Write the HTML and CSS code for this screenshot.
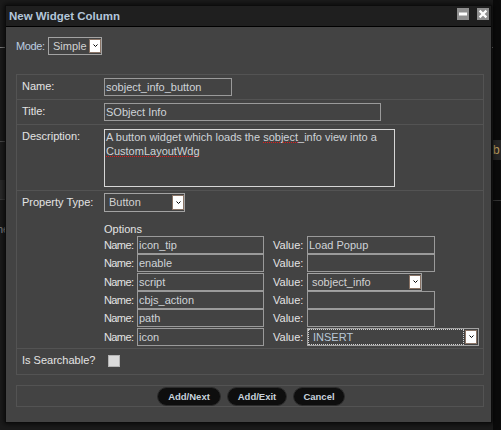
FILE: index.html
```html
<!DOCTYPE html>
<html>
<head>
<meta charset="utf-8">
<title>New Widget Column</title>
<link rel="stylesheet" href="styles.css">
</head>
<body>
<div class="backdrop" aria-hidden="true">
  <div class="bd-hline"></div>
  <div class="bd-leftbox"></div>
  <div class="bd-lefttext">ne</div>
  <div class="bd-right"><div class="bd-rightband">b</div><div class="bd-rightline"></div></div>
</div>

<div class="window">
  <div class="titlebar">
    <span class="title">New Widget Column</span>
    <div class="tb-btns">
      <span class="tb-btn"><svg width="12" height="12" viewBox="0 0 12 12"><rect x="2" y="4.5" width="8" height="3" fill="#fff"/></svg></span>
      <span class="tb-btn"><svg width="12" height="12" viewBox="0 0 12 12"><path d="M2.6 2.6 L9.4 9.4 M9.4 2.6 L2.6 9.4" stroke="#fff" stroke-width="2.2" fill="none"/></svg></span>
    </div>
  </div>

  <div class="content">
    <div class="mode-row">
      <span class="mode-label">Mode:</span>
      <div class="select mode-select"><span class="txt">Simple</span><span class="arrow"><svg width="5" height="3" viewBox="0 0 5 3"><path d="M0.5 0.5 L2.5 2.5 L4.5 0.5" stroke="#000" stroke-width="1" fill="none"/></svg></span></div>
    </div>

    <div class="form">
      <div class="row row-name">
        <div class="lbl">Name:</div>
        <div class="val"><div class="input w-name">sobject_info_button</div></div>
      </div>
      <div class="row row-title">
        <div class="lbl">Title:</div>
        <div class="val"><div class="input w-title">SObject Info</div></div>
      </div>
      <div class="row row-desc">
        <div class="lbl">Description:</div>
        <div class="val"><div class="textarea">A button widget which loads the <span class="sp">sobject</span>_info view into a<br><span class="sp">CustomLayoutWdg</span></div></div>
      </div>
      <div class="row row-prop">
        <div class="lbl">Property Type:</div>
        <div class="val prop-val">
          <div class="select prop-select"><span class="txt">Button</span><span class="arrow"><svg width="5" height="3" viewBox="0 0 5 3"><path d="M0.5 0.5 L2.5 2.5 L4.5 0.5" stroke="#000" stroke-width="1" fill="none"/></svg></span></div>
          <div class="opts-title">Options</div>
          <div class="opts">
            <span class="olbl nlbl">Name:</span><div class="input oname">icon_tip</div><span class="olbl vlbl">Value:</span><div class="input ovalue">Load Popup</div>
            <span class="olbl nlbl">Name:</span><div class="input oname">enable</div><span class="olbl vlbl">Value:</span><div class="input ovalue"></div>
            <span class="olbl nlbl">Name:</span><div class="input oname">script</div><span class="olbl vlbl">Value:</span><div class="select oselect-script"><span class="txt">sobject_info</span><span class="arrow"><svg width="5" height="3" viewBox="0 0 5 3"><path d="M0.5 0.5 L2.5 2.5 L4.5 0.5" stroke="#000" stroke-width="1" fill="none"/></svg></span></div>
            <span class="olbl nlbl">Name:</span><div class="input oname">cbjs_action</div><span class="olbl vlbl">Value:</span><div class="input ovalue"></div>
            <span class="olbl nlbl">Name:</span><div class="input oname">path</div><span class="olbl vlbl">Value:</span><div class="input ovalue"></div>
            <span class="olbl nlbl">Name:</span><div class="input oname">icon</div><span class="olbl vlbl">Value:</span><div class="select focused oselect-insert"><span class="txt">INSERT</span><span class="arrow"><svg width="5" height="3" viewBox="0 0 5 3"><path d="M0.5 0.5 L2.5 2.5 L4.5 0.5" stroke="#000" stroke-width="1" fill="none"/></svg></span></div>
          </div>
        </div>
      </div>
      <div class="row row-search">
        <div class="lbl">Is Searchable?</div>
        <div class="val"><span class="chk"></span></div>
      </div>
    </div>

    <div class="actions">
      <span class="btn b-next">Add/Next</span>
      <span class="btn b-exit">Add/Exit</span>
      <span class="btn b-cancel">Cancel</span>
    </div>
  </div>
</div>
</body>
</html>
```
FILE: styles.css
```css
* { box-sizing: border-box; }
html, body { margin: 0; }
body {
  width: 501px;
  height: 430px;
  padding: 5px 0 0 5px;
  background: #1b1b1b;
  font-family: "Liberation Sans", Arial, sans-serif;
  font-size: 11px;
  position: relative;
  overflow: hidden;
}

/* background application, partly hidden under the dialog */
.backdrop { position: absolute; inset: 0; z-index: 0; }
.bd-hline { position: absolute; left: 0; top: 47px; width: 501px; height: 1px; background: #7a7a7a; }
.bd-leftbox { position: absolute; left: 0; top: 141px; width: 12px; height: 59px; border-top: 1px solid #4a4a4a; border-bottom: 1px solid #3a3a3a; background: linear-gradient(#1d1d1d 0 38px, #2a2a2a 38px); }
.bd-lefttext { position: absolute; left: -3px; top: 223px; color: #8a8a8a; font-size: 11px; }
.bd-right { position: absolute; left: 493px; top: 0; width: 8px; height: 430px; background: #0b0b0b; }
.bd-rightband { position: absolute; left: 0; top: 140px; width: 8px; height: 20px; background: #262626; color: #b89a5c; font-size: 12px; line-height: 20px; }
.bd-rightline { position: absolute; left: 0; top: 200px; width: 8px; height: 1px; background: #333; }

/* dialog window */
.window {
  position: relative;
  z-index: 1;
  width: 487px;
  height: 418px;
  background: #434343;
  border: 1px solid #0c0c0c;
  box-shadow: 0 0 5px 1px rgba(0,0,0,0.7);
  display: flex;
  flex-direction: column;
}
.titlebar {
  height: 21px;
  flex-shrink: 0;
  background: #1f1f1f;
  border-bottom: 1px solid #000;
  display: flex;
  padding: 0 2px 0 3px;
}
.title {
  flex: 1;
  font-weight: bold;
  font-size: 11.5px;
  line-height: 20px;
  color: #b3c6da;
}
.tb-btns { display: flex; gap: 8px; margin-top: 2px; }
.tb-btn {
  width: 12px;
  height: 12px;
  background: #8f8f8f;
  display: block;
}
.tb-btn svg { display: block; }

.content { padding: 10px 7px 0 10px; }

.mode-row { display: flex; height: 18px; }
.mode-label { width: 32px; line-height: 18px; color: #bccde0; letter-spacing: -0.4px; }

/* select-like control */
.select {
  display: flex;
  height: 18px;
  border: 1px solid #a3a3a3;
  padding-left: 4px;
  color: #d2d2d2;
}
.select .txt { flex: 1; line-height: 16px; white-space: nowrap; }
.arrow {
  width: 12px;
  margin: 1px 0;
  background: #fff;
  border: 1px solid #8a7466;
  display: flex;
  align-items: center;
  justify-content: center;
}
.arrow svg { display: block; margin-top: -1px; }
.mode-select { width: 54px; }

/* form table */
.form { margin-top: 19px; border: 1px solid #535353; }
.row { display: flex; border-bottom: 1px solid #535353; }
.row:last-child { border-bottom: none; }
.row-name, .row-title { height: 25px; }
.row-desc { height: 66px; }
.row-prop { height: 158px; }
.row-search { height: 25px; }
.lbl {
  width: 87px;
  flex-shrink: 0;
  padding: 3px 0 0 5px;
  line-height: 16px;
  color: #e4e4e4;
}
.val { padding-top: 3px; }

.input {
  height: 18px;
  border: 1px solid #9a9a9a;
  padding: 0 1px;
  line-height: 16px;
  color: #cfd3d8;
  white-space: nowrap;
  overflow: hidden;
}
.w-name { width: 128px; }
.w-title { width: 277px; }

.textarea {
  width: 291px;
  height: 58px;
  margin-top: 1px;
  border: 1px solid #d6d6d6;
  padding: 0 1px;
  line-height: 14.4px;
  color: #cfd3d8;
}
.sp {
  background-image: repeating-linear-gradient(to right, #e01818 0 1px, transparent 1px 2px);
  background-size: 100% 1px;
  background-position: 0 100%;
  background-repeat: no-repeat;
}

.prop-val { padding-top: 2px; }
.prop-select { width: 81px; height: 19px; margin-bottom: 11px; }
.prop-select .txt { line-height: 17px; }
.opts-title { line-height: 13px; color: #e4e4e4; }
.opts {
  display: grid;
  grid-template-columns: 33px 127px 9px 34px auto;
  grid-template-rows: 18px 19px 18px 18px 19px 18px;
}
.opts .olbl { line-height: 18px; color: #e4e4e4; white-space: nowrap; }
.opts .nlbl { letter-spacing: -0.6px; }
.opts .vlbl { grid-column: 4; }
.opts > .input, .opts > .select { align-self: start; }
.oname { width: 127px; }
.ovalue { width: 128px; }
.oselect-script { width: 115px; }
.oselect-insert { width: 172px; padding-left: 0; }
.focused .txt {
  border: 1px dotted #cfcfcf;
  line-height: 14px;
  padding-left: 4px;
  margin-right: 1px;
  color: #b9c8d8;
}
.focused .arrow { margin-right: 1px; }

.chk {
  display: block;
  width: 12px;
  height: 12px;
  margin: 3px 0 0 4px;
  background: #dadada;
  border: 1px solid #b4b4b4;
}

/* bottom action bar */
.actions {
  margin-top: 10px;
  height: 22px;
  border: 1px solid #535353;
  display: flex;
  gap: 6px;
  padding: 1px 0 0 140px;
}
.btn {
  height: 19px;
  border-radius: 10px;
  background: #0e0e0e;
  border: 1px solid #2c2c2c;
  color: #c8d2dc;
  font-weight: bold;
  font-size: 9.5px;
  line-height: 17px;
  text-align: center;
}
.b-next { width: 64px; }
.b-exit { width: 60px; }
.b-cancel { width: 52px; }
```
